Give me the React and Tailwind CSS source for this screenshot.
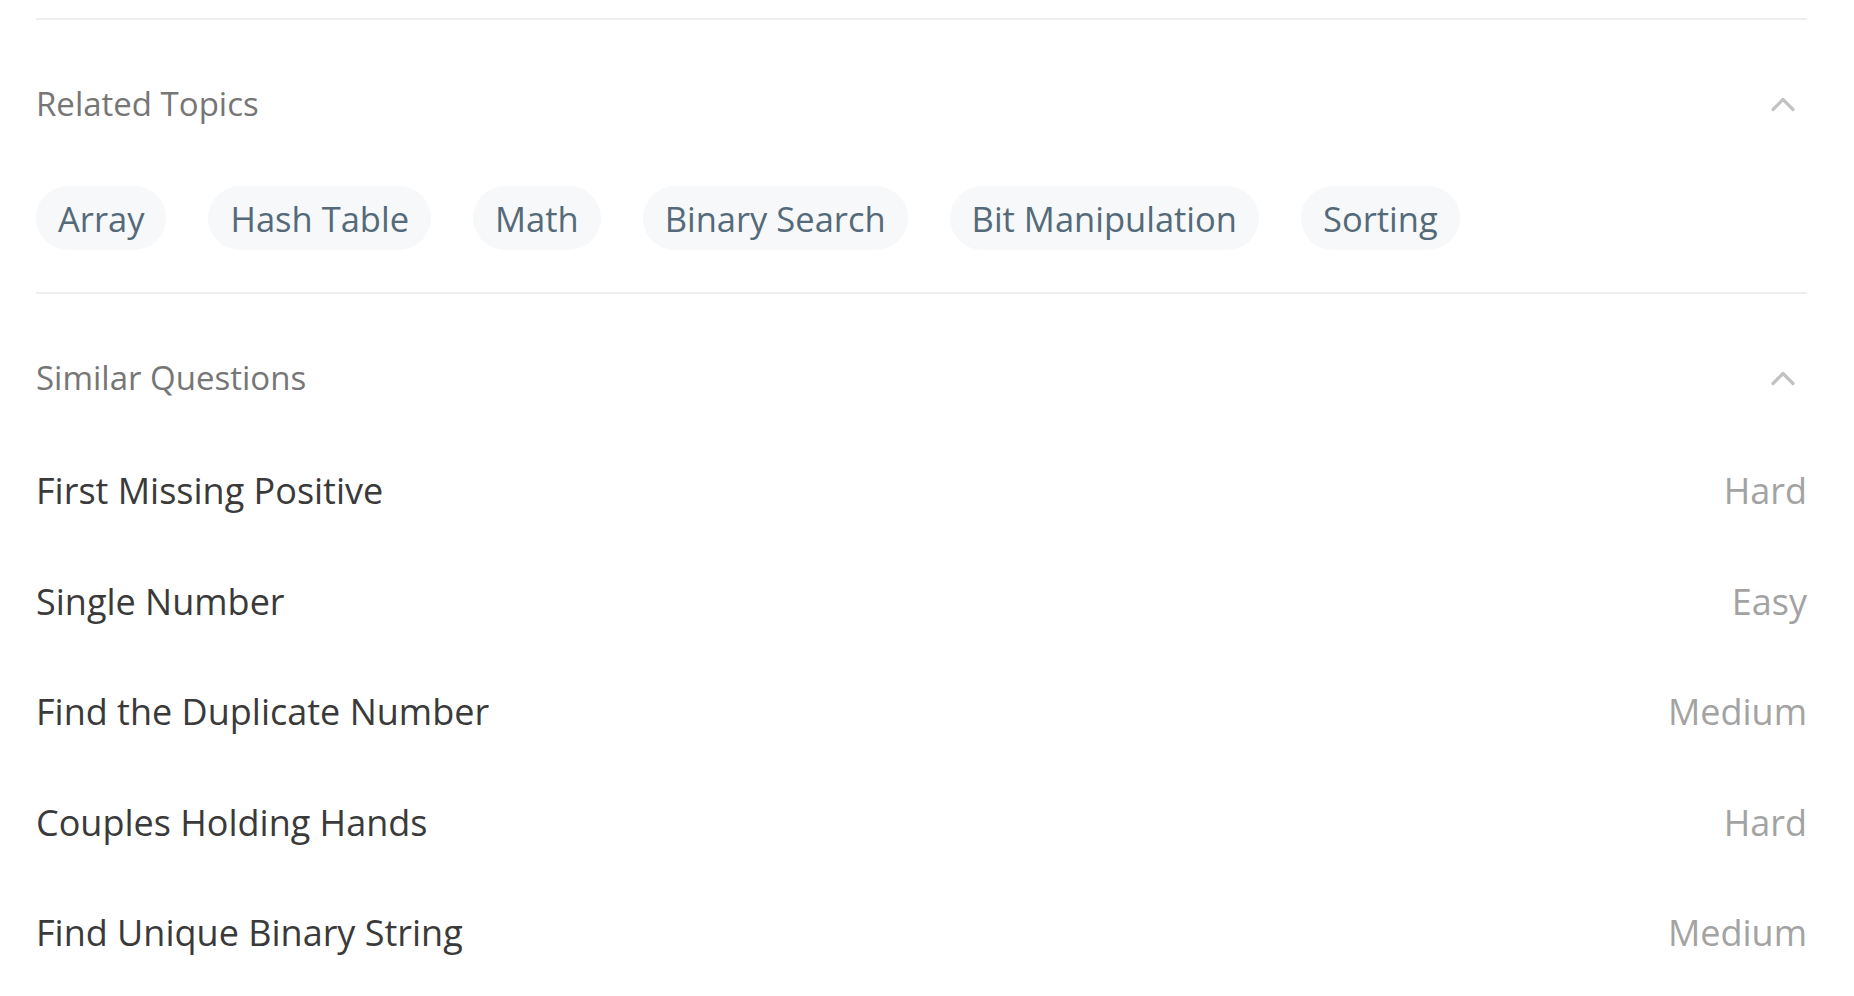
const topics = ['Array', 'Hash Table', 'Math', 'Binary Search', 'Bit Manipulation', 'Sorting'];

const questions = [
  { title: 'First Missing Positive', level: 'Hard' },
  { title: 'Single Number', level: 'Easy' },
  { title: 'Find the Duplicate Number', level: 'Medium' },
  { title: 'Couples Holding Hands', level: 'Hard' },
  { title: 'Find Unique Binary String', level: 'Medium' },
];

const Chevron = () => (
  <svg width="24" height="16" viewBox="0 0 24 16" fill="none" className="mr-[12px]">
    <path d="M2 13.5 L12 3.5 L22 13.5" stroke="#c2c2c2" strokeWidth="3.2" strokeLinecap="round" strokeLinejoin="round" />
  </svg>
);

const SectionHeader = ({ title }) => (
  <div className="flex items-center justify-between pt-[62px]">
    <span className="text-[33px] leading-[44px] text-[#767676]">{title}</span>
    <Chevron />
  </div>
);

export default function App() {
  return (
    <div
      className="min-h-screen bg-white pt-[18px] pl-[36px] pr-[47px]"
      style={{ fontFamily: '"Open Sans", "Noto Sans", sans-serif' }}
    >
      <section className="border-t-2 border-[#eeeeee] pb-[42px]">
        <SectionHeader title="Related Topics" />
        <div className="mt-[60px] flex flex-wrap gap-[42px]">
          {topics.map((t) => (
            <span
              key={t}
              className="flex h-[64px] items-center rounded-full bg-[#f7f8fa] px-[22px] pt-[2px] text-[34.5px] text-[#546a79]"
            >
              {t}
            </span>
          ))}
        </div>
      </section>

      <section className="border-t-2 border-[#eeeeee]">
        <SectionHeader title="Similar Questions" />
        <div className="mt-[36px]">
          {questions.map((q) => (
            <div key={q.title} className="flex h-[110.5px] items-center justify-between">
              <span className="text-[36px] text-[#3a3a3a]">{q.title}</span>
              <span className="text-[36px] text-[#a3a3a3]">{q.level}</span>
            </div>
          ))}
        </div>
      </section>
    </div>
  );
}
